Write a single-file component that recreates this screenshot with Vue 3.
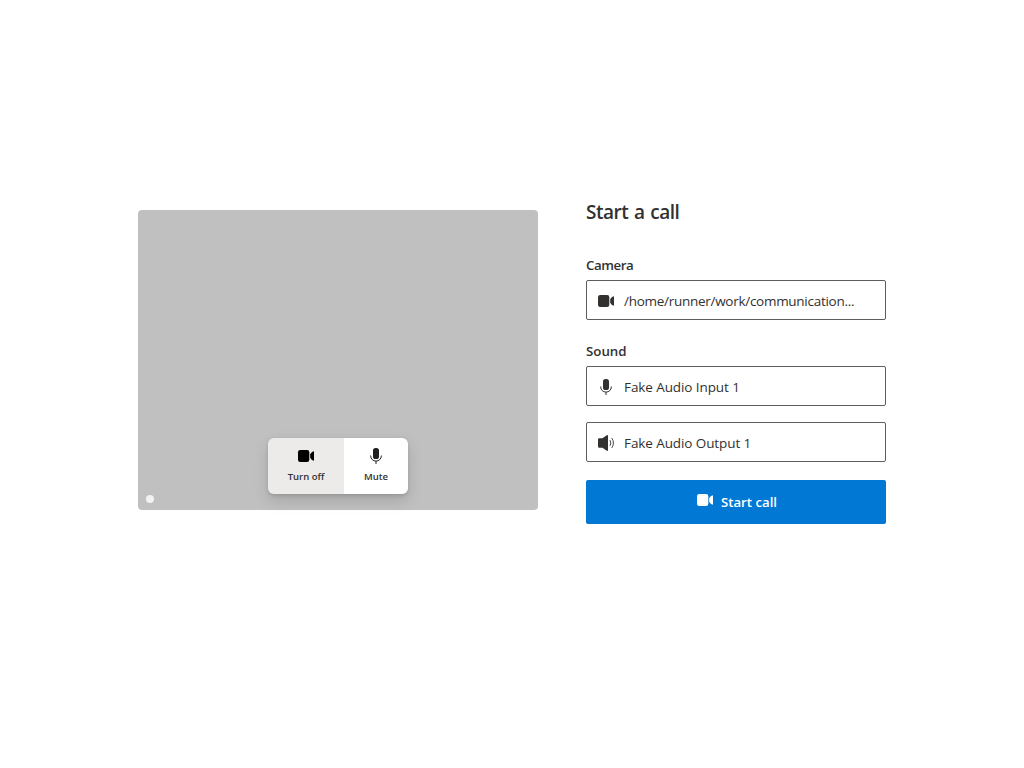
<script setup>
import { h } from 'vue'

const paths = {
  camera: [
    h('rect', { x: 0, y: 2, width: 11.3, height: 12, rx: 2.2 }),
    h('path', { d: 'M12.2 6.3Q13.8 3.2 16 3.2v9.6Q13.8 12.8 12.2 9.7Z' }),
  ],
  mic: [
    h('rect', { x: 5, y: 0, width: 6, height: 11, rx: 2.6 }),
    h('path', {
      d: 'M2.7 7.5v.6a5.3 5 0 0 0 10.6 0v-.6M8 13.1V16',
      fill: 'none',
      stroke: 'currentColor',
      'stroke-width': 1,
    }),
  ],
  speaker: [
    h('path', { d: 'M8.4.5Q10-.6 10 1v14q0 1.6-1.6.5L4.5 12.8H1.2Q0 12.8 0 11.6V4.4Q0 3.2 1.2 3.2h3.3Z' }),
    h('path', {
      d: 'M12 5.2q1.6 2.8 0 5.6M13.8 3.1q3.2 4.9 0 9.8',
      fill: 'none',
      stroke: 'currentColor',
      'stroke-width': 0.9,
    }),
  ],
}

const Icon = (props) =>
  h('svg', { width: 16, height: 16, viewBox: '0 0 16 16', fill: 'currentColor', overflow: 'visible' }, paths[props.name])
Icon.props = ['name']
</script>

<template>
  <main class="page">
    <section class="preview">
      <span class="dot"></span>
      <div class="controls">
        <button class="control active">
          <Icon name="camera" />
          <span>Turn off</span>
        </button>
        <button class="control">
          <Icon name="mic" />
          <span>Mute</span>
        </button>
      </div>
    </section>

    <section class="setup">
      <h1>Start a call</h1>
      <h2 class="camera-label">Camera</h2>
      <div class="select">
        <Icon name="camera" />
        <span class="device-path">/home/runner/work/communication...</span>
      </div>
      <h2 class="sound-label">Sound</h2>
      <div class="select">
        <Icon name="mic" />
        <span class="device-name">Fake Audio Input 1</span>
      </div>
      <div class="select output">
        <Icon name="speaker" />
        <span class="device-name">Fake Audio Output 1</span>
      </div>
      <button class="start">
        <Icon name="camera" />
        <span>Start call</span>
      </button>
    </section>
  </main>
</template>

<style>
body {
  background: #fff;
}
</style>

<style scoped>
.page {
  box-sizing: border-box;
  height: 768px;
  padding: 198px 138px 0;
  display: flex;
  gap: 48px;
  align-items: flex-start;
  color: #323130;
  font-family: "Open Sans", "Noto Sans", sans-serif;
  white-space: nowrap;
}
button {
  font-family: inherit;
  border: 0;
  padding: 0;
  margin: 0;
  color: inherit;
}
svg {
  flex: none;
  display: block;
}
.preview {
  position: relative;
  width: 400px;
  height: 300px;
  margin-top: 12px;
  border-radius: 4px;
  background: #c0c0c0;
}
.dot {
  position: absolute;
  left: 8px;
  bottom: 7px;
  width: 8px;
  height: 8px;
  border-radius: 50%;
  background: #f3f2f1;
}
.controls {
  position: absolute;
  left: 130px;
  bottom: 16px;
  display: flex;
  height: 56px;
  border-radius: 6px;
  overflow: hidden;
  box-shadow: 0 6.4px 14.4px rgba(0, 0, 0, 0.132), 0 1.2px 3.6px rgba(0, 0, 0, 0.108);
}
.control {
  width: 64px;
  background: #fff;
  display: flex;
  flex-direction: column;
  align-items: center;
  padding-top: 10px;
  gap: 6px;
  font-size: 9.5px;
  font-weight: 600;
  line-height: 14px;
}
.control svg {
  color: #201f1e;
}
.control.active {
  width: 76px;
  background: #edebe9;
}
.control.active svg {
  color: #000;
}
.setup {
  width: 300px;
}
h1,
h2 {
  margin: 0;
  font-weight: 600;
}
h1 {
  font-size: 19px;
  line-height: 28px;
  letter-spacing: -0.5px;
  word-spacing: 1.3px;
}
h2 {
  font-size: 13.3px;
  line-height: 20px;
}
.camera-label {
  margin-top: 29px;
  letter-spacing: -0.45px;
}
.sound-label {
  margin-top: 21px;
}
.select {
  box-sizing: border-box;
  height: 40px;
  margin-top: 5px;
  padding: 2px 11px 0;
  border: 1px solid #605e5c;
  border-radius: 2px;
  display: flex;
  align-items: center;
  gap: 10px;
  font-size: 13.5px;
}
.device-path {
  letter-spacing: -0.28px;
}
.device-name {
  letter-spacing: -0.09px;
}
.output {
  margin-top: 16px;
}
.start {
  box-sizing: border-box;
  width: 300px;
  height: 44px;
  margin-top: 18px;
  padding-left: 2px;
  border-radius: 2px;
  background: #0078d4;
  color: #fff;
  display: flex;
  align-items: center;
  justify-content: center;
  gap: 8px;
  font-size: 13.2px;
  font-weight: 600;
}
.start svg {
  margin-top: -4px;
}
</style>
